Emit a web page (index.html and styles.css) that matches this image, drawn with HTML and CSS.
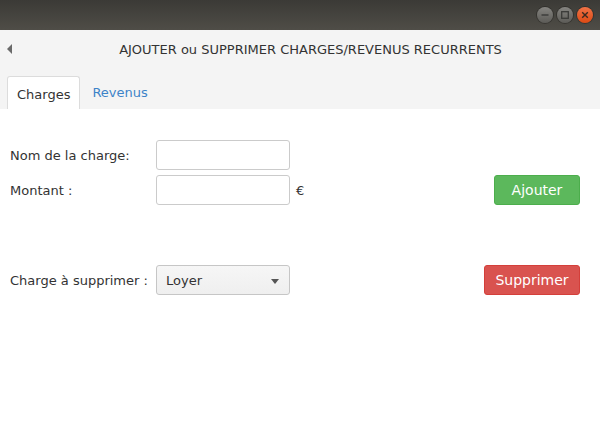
FILE: index.html
```html
<!DOCTYPE html>
<html lang="fr">
<head>
<meta charset="utf-8">
<title>Charges/Revenus</title>
<link rel="stylesheet" href="styles.css">
</head>
<body>
<div class="window">
  <div class="titlebar">
    <span class="wbtn"><svg width="16" height="16" viewBox="0 0 16 16"><line x1="4.5" y1="8" x2="11.5" y2="8" stroke="#3a3a38" stroke-width="1.4"/></svg></span>
    <span class="wbtn"><svg width="16" height="16" viewBox="0 0 16 16"><rect x="4.7" y="4.7" width="6.6" height="6.6" fill="none" stroke="#3a3a38" stroke-width="1.3"/></svg></span>
    <span class="wbtn close"><svg width="16" height="16" viewBox="0 0 16 16"><path d="M5.2 5.2 L10.8 10.8 M10.8 5.2 L5.2 10.8" stroke="#3a2a20" stroke-width="1.4"/></svg></span>
  </div>
  <div class="header">
    <div class="toolbar">
      <span class="back"></span>
      <span class="title">AJOUTER ou SUPPRIMER CHARGES/REVENUS RECURRENTS</span>
    </div>
    <div class="tabs">
      <span class="tab active">Charges</span>
      <span class="tab">Revenus</span>
    </div>
  </div>
  <div class="content">
    <div class="row">
      <label class="lbl">Nom de la charge:</label>
      <span class="field"></span>
    </div>
    <div class="row second">
      <label class="lbl">Montant :</label>
      <span class="field"></span>
      <span class="euro">€</span>
      <span class="btn green">Ajouter</span>
    </div>
    <div class="row third">
      <label class="lbl">Charge à supprimer :</label>
      <span class="select">Loyer<span class="caret"></span></span>
      <span class="btn red">Supprimer</span>
    </div>
  </div>
</div>
</body>
</html>
```
FILE: styles.css
```css
html, body {
  margin: 0;
  padding: 0;
}
body {
  width: 600px;
  height: 430px;
  overflow: hidden;
  font-family: "DejaVu Sans", sans-serif;
  font-size: 13px;
  color: #333;
  background: #fff;
}
.window {
  display: flex;
  flex-direction: column;
  height: 430px;
}
.titlebar {
  height: 30px;
  flex: none;
  display: flex;
  align-items: center;
  justify-content: flex-end;
  gap: 4px;
  padding-right: 7px;
  background: linear-gradient(#3b3a36, #4f4d47);
  box-sizing: border-box;
}
.wbtn {
  width: 16px;
  height: 16px;
  border-radius: 50%;
  background: linear-gradient(#858480, #5c5b57);
  box-shadow: 0 0 0 1px rgba(0,0,0,0.25);
  display: flex;
}
.wbtn.close {
  background: linear-gradient(#f07246, #dd4a14);
}
.header {
  background: #f4f4f4;
  flex: none;
  display: flex;
  flex-direction: column;
}
.toolbar {
  height: 38px;
  display: flex;
  align-items: center;
  position: relative;
  justify-content: center;
}
.back {
  position: absolute;
  left: 7px;
  top: 14px;
  width: 0;
  height: 0;
  border-top: 5px solid transparent;
  border-bottom: 5px solid transparent;
  border-right: 5px solid #6a6a6a;
}
.title {
  color: #333;
  font-size: 13px;
  padding-left: 21px;
}
.tabs {
  display: flex;
  margin-top: 8px;
  padding-left: 7px;
  height: 33px;
}
.tab {
  display: flex;
  align-items: center;
  padding: 0 12px 0 12px;
  color: #3d83c8;
  box-sizing: border-box;
  height: 33px;
}
.tab.active {
  background: #fff;
  color: #333;
  border: 1px solid #dcdcdc;
  border-bottom: none;
  border-radius: 3px 3px 0 0;
  padding: 2px 9px 0 9px;
}
.content {
  flex: 1;
  background: #fff;
  padding: 31px 20px 0 10px;
}
.row {
  display: flex;
  align-items: center;
  height: 30px;
}
.row.second {
  margin-top: 5px;
}
.row.third {
  margin-top: 60px;
}
.lbl {
  width: 146px;
  flex: none;
  padding-top: 1px;
}
.field {
  width: 134px;
  height: 30px;
  box-sizing: border-box;
  border: 1px solid #cbcbcb;
  border-radius: 3px;
  background: #fff;
}
.euro {
  margin-left: 6px;
}
.btn {
  margin-left: auto;
  height: 30px;
  box-sizing: border-box;
  display: flex;
  align-items: center;
  justify-content: center;
  font-size: 14px;
  color: #fff;
  border-radius: 3px;
}
.btn.green {
  width: 86px;
  background: #5cb85c;
  border: 1px solid #4cae4c;
}
.btn.red {
  width: 96px;
  background: #d9534f;
  border: 1px solid #d43f3a;
}
.select {
  width: 134px;
  height: 30px;
  box-sizing: border-box;
  border: 1px solid #c6c6c6;
  border-radius: 3px;
  background: linear-gradient(#f6f6f6, #efefef);
  display: flex;
  align-items: center;
  padding-left: 9px;
  position: relative;
}
.caret {
  position: absolute;
  right: 10px;
  top: 13px;
  width: 0;
  height: 0;
  border-left: 4px solid transparent;
  border-right: 4px solid transparent;
  border-top: 5px solid #555;
}
```
